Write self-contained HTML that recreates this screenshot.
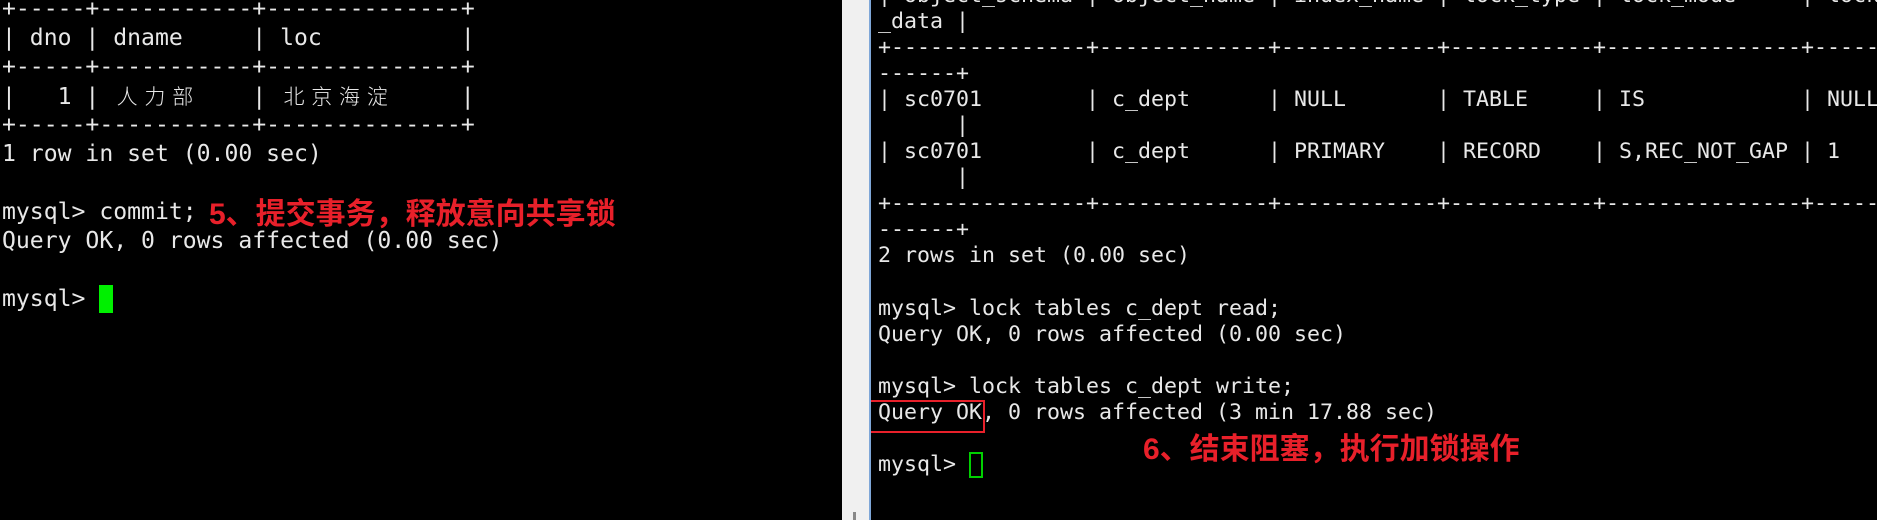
<!DOCTYPE html>
<html><head><meta charset="utf-8"><style>
html,body{margin:0;padding:0;width:1877px;height:520px;overflow:hidden;background:#000;}
.pane{position:absolute;top:0;height:520px;overflow:hidden;background:#000;}
.t{position:absolute;font-family:"DejaVu Sans Mono","Liberation Mono","Noto Sans CJK SC",monospace;font-size:23.1px;color:#e8e8e8;}
.t div{white-space:pre;}
.l div{height:29px;line-height:29px;}
.r{font-size:21.6px;}
.r div{height:26.05px;line-height:26.05px;}
.c{display:inline-block;width:27.8px;text-align:center;font-family:"Noto Sans CJK SC",sans-serif;font-weight:300;font-size:21px;}
.red{position:absolute;color:#e8202a;font-family:"Liberation Sans","Noto Sans CJK SC",sans-serif;font-weight:bold;font-size:30px;white-space:nowrap;line-height:30px;}
</style></head><body>
<div class="pane" style="left:0;width:842px;">
<div class="t l" style="left:2px;top:-5.5px;"><div>+-----+-----------+--------------+</div><div>| dno | dname     | loc          |</div><div>+-----+-----------+--------------+</div><div>|   1 | <span class="c">人</span><span class="c">力</span><span class="c">部</span>    | <span class="c">北</span><span class="c">京</span><span class="c">海</span><span class="c">淀</span>     |</div><div>+-----+-----------+--------------+</div><div>1 row in set (0.00 sec)</div><div> </div><div>mysql&gt; commit;</div><div>Query OK, 0 rows affected (0.00 sec)</div><div> </div><div>mysql&gt; </div></div>
 <div style="position:absolute;left:99px;top:285px;width:14px;height:28px;background:#00f000;"></div>
 <div class="red" style="left:209px;top:200px;">5、提交事务，释放意向共享锁</div>
</div>
<div style="position:absolute;left:842px;top:0;width:27px;height:520px;background:#f0f0f0;"></div>
<div style="position:absolute;left:853px;top:512px;width:3px;height:8px;background:#888;"></div>
<div style="position:absolute;left:869px;top:0;width:2px;height:520px;background:#7fa7d8;"></div>
<div class="pane" style="left:871px;width:1006px;">
<div class="t r" style="left:7px;top:-17px;"><div>| object_schema | object_name | index_name | lock_type | lock_mode     | lock</div><div>_data |</div><div>+---------------+-------------+------------+-----------+---------------+------</div><div>------+</div><div>| sc0701        | c_dept      | NULL       | TABLE     | IS            | NULL</div><div>      |</div><div>| sc0701        | c_dept      | PRIMARY    | RECORD    | S,REC_NOT_GAP | 1</div><div>      |</div><div>+---------------+-------------+------------+-----------+---------------+------</div><div>------+</div><div>2 rows in set (0.00 sec)</div><div> </div><div>mysql&gt; lock tables c_dept read;</div><div>Query OK, 0 rows affected (0.00 sec)</div><div> </div><div>mysql&gt; lock tables c_dept write;</div><div>Query OK, 0 rows affected (3 min 17.88 sec)</div><div> </div><div>mysql&gt; </div></div>
 <div style="position:absolute;left:98px;top:452px;width:10px;height:22px;border:2px solid #00d000;"></div>
 <div style="position:absolute;left:-6px;top:400px;width:116px;height:29px;border:2px solid #e8202a;"></div>
 <div class="red" style="left:272px;top:435px;">6、结束阻塞，执行加锁操作</div>
</div>
</body></html>
